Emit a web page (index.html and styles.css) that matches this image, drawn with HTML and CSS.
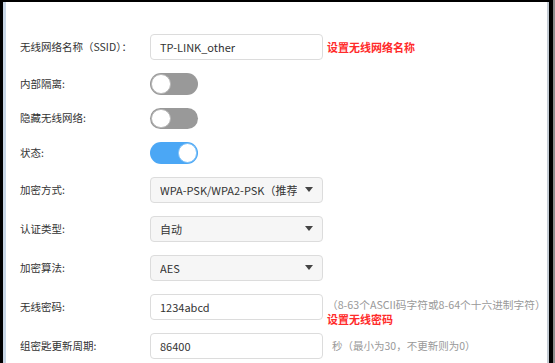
FILE: index.html
```html
<!DOCTYPE html>
<html lang="zh-CN">
	<head>
		<title>无线设置</title>
		<meta charset="UTF-8">
		<meta content="width=device-width,initial-scale=1.0" name="viewport">
		<link rel="stylesheet" href="styles.css">
	</head>
	<body>
		<div class="panel">
			<div class="form">
				<div class="row">
					<label class="lbl">无线网络名称（SSID）：</label>
					<div class="field">TP-LINK_other</div>
					<span class="note">设置无线网络名称</span>
				</div>
				<div class="row">
					<label class="lbl">内部隔离:</label>
					<div class="switch"><span class="knob"></span></div>
				</div>
				<div class="row">
					<label class="lbl">隐藏无线网络:</label>
					<div class="switch"><span class="knob"></span></div>
				</div>
				<div class="row">
					<label class="lbl">状态:</label>
					<div class="switch on"><span class="knob"></span></div>
				</div>
				<div class="row">
					<label class="lbl">加密方式:</label>
					<div class="select"><span class="val">WPA-PSK/WPA2-PSK（推荐）</span><span class="caret"></span></div>
				</div>
				<div class="row">
					<label class="lbl">认证类型:</label>
					<div class="select"><span class="val">自动</span><span class="caret"></span></div>
				</div>
				<div class="row">
					<label class="lbl">加密算法:</label>
					<div class="select"><span class="val">AES</span><span class="caret"></span></div>
				</div>
				<div class="row top">
					<label class="lbl">无线密码:</label>
					<div class="field">1234abcd</div>
					<div class="aside">
						<span class="hint wide">（8-63个ASCII码字符或8-64个十六进制字符）</span>
						<span class="note">设置无线密码</span>
					</div>
				</div>
				<div class="row">
					<label class="lbl">组密匙更新周期:</label>
					<div class="field">86400</div>
					<span class="hint sec">秒（最小为30，不更新则为0）</span>
				</div>
			</div>
		</div>
	</body>
</html>
```

FILE: styles.css
```css
html,body{margin:0;padding:0;}
body{background:#000;border-right:2px solid #8c8c8c;height:363px;overflow:hidden;font-family:"Noto Sans CJK SC","Noto Sans",sans-serif;color:#333;}
.panel{margin:2px 4px 0 3px;height:361px;background:#fff;border-left:3px solid #c8d6e5;border-right:2px solid #c3cbd3;overflow:hidden;}
.form{display:flex;flex-direction:column;gap:13px;padding:32px 0 0 14px;}
.row{display:flex;align-items:center;}
.row.top{align-items:flex-start;}
.lbl{width:130px;flex:none;font-size:10.5px;line-height:12px;color:#333;}
.row.top .lbl{margin-top:7px;}
.field,.select{width:173px;height:26px;box-sizing:border-box;border:1px solid #dcdcdc;border-radius:4px;padding:0 9px;font-size:11px;line-height:24px;color:#333;flex:none;}
.field{background:#fff;}
.select{background:#f6f6f6;display:flex;align-items:center;}
.select .val{flex:1;overflow:hidden;white-space:nowrap;}
.select .caret{flex:none;width:0;height:0;border-left:4px solid transparent;border-right:4px solid transparent;border-top:5px solid #444;margin:0 0 0 8px;}
.switch{width:48px;height:21.5px;box-sizing:border-box;border-radius:11px;background:#999;padding:1px;display:flex;}
.switch .knob{width:19.5px;height:19.5px;box-sizing:border-box;border-radius:50%;background:#fff;border:1px solid #b5b5b5;}
.switch.on{background:#4ba7f5;justify-content:flex-end;}
.switch.on .knob{border-color:#7cc0f8;}
.note{color:#ff2b2b;font-weight:bold;font-size:11px;line-height:12px;margin-left:4px;white-space:nowrap;}
.aside{display:flex;flex-direction:column;height:26px;padding-top:5px;box-sizing:border-box;overflow:visible;}
.aside .note{margin-top:3px;}
.hint{color:#999;font-size:10.5px;line-height:11px;white-space:nowrap;margin-left:4px;}
.hint.wide{font-size:10.7px;}
.hint.sec{margin-left:9px;}
```
